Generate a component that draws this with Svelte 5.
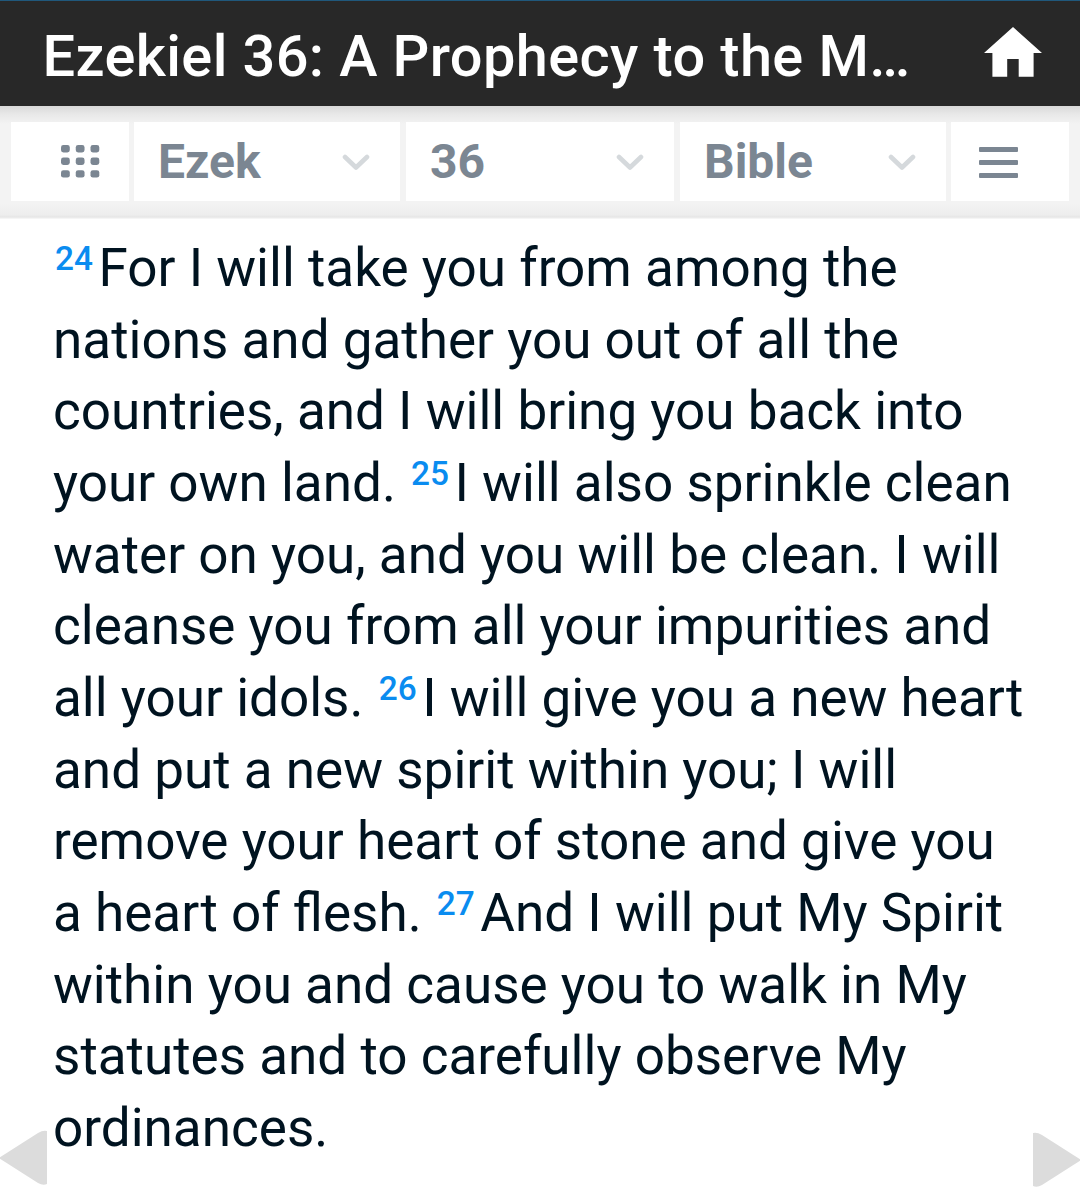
<script>
  const lines = [
    [{ verse: 24 }, 'For I will take you from among the'],
    ['nations and gather you out of all the'],
    ['countries, and I will bring you back into'],
    ['your own land. ', { verse: 25 }, 'I will also sprinkle clean'],
    ['water on you, and you will be clean. I will'],
    ['cleanse you from all your impurities and'],
    ['all your idols. ', { verse: 26 }, 'I will give you a new heart'],
    ['and put a new spirit within you; I will'],
    ['remove your heart of stone and give you'],
    ['a heart of flesh. ', { verse: 27 }, 'And I will put My Spirit'],
    ['within you and cause you to walk in My'],
    ['statutes and to carefully observe My'],
    ['ordinances.']
  ];
  const pickers = ['Ezek', '36', 'Bible'];
  const steps = [0, 1, 2];
</script>

<div class="page">
  <header>
    <h1>Ezekiel 36: A Prophecy to the M…</h1>
    <svg class="home" width="58" height="50" viewBox="0 0 58 50" aria-label="Home">
      <path d="M29 0 58 26H49.6V49.8H34.7V32H23.2V49.8H8.4V26H0Z" fill="#fff" />
    </svg>
  </header>

  <nav>
    <button class="grid" aria-label="All books">
      <svg width="39" height="33" viewBox="0 0 39 33">
        {#each steps as row}
          {#each steps as col}
            <rect x={col * 14.75} y={row * 12.6} width="8.8" height="7.4" rx="2.4" fill="#7b8692" />
          {/each}
        {/each}
      </svg>
    </button>
    {#each pickers as label}
      <button class="picker">
        <span>{label}</span>
        <svg width="28" height="17" viewBox="0 0 28 17">
          <path d="M3 3 14 13.5 25 3" fill="none" stroke="#d5d9dc" stroke-width="4.6" stroke-linecap="round" stroke-linejoin="round" />
        </svg>
      </button>
    {/each}
    <button class="menu" aria-label="Menu">
      <svg width="39" height="32" viewBox="0 0 39 32">
        {#each steps as row}
          <rect x="0" y={row * 13} width="39" height="5" rx="1" fill="#7b8692" />
        {/each}
      </svg>
    </button>
  </nav>

  <main>
    {#each lines as line}
      <p>{#each line as part}{#if part.verse}<sup>{part.verse}</sup>{:else}{part}{/if}{/each}</p>
    {/each}
  </main>

  <svg class="arrow prev" width="48" height="56" viewBox="0 0 48 56" aria-label="Previous">
    <path d="M-1 28 38 3Q43 0 47 1V54Q43 56 38 53Z" fill="#dcdcdc" />
  </svg>
  <svg class="arrow next" width="48" height="56" viewBox="0 0 48 56" aria-label="Next">
    <path d="M49 28 10 3Q5 0 1 1V54Q5 56 10 53Z" fill="#dcdcdc" />
  </svg>
</div>

<style>
  :global(body) {
    margin: 0;
    background: #fff;
  }
  .page {
    position: relative;
    width: 1080px;
    height: 1189px;
    overflow: hidden;
    background: #fff;
    font-family: Roboto, sans-serif;
  }
  header {
    box-sizing: border-box;
    height: 106px;
    display: flex;
    justify-content: space-between;
    align-items: flex-start;
    padding: 0 38px 0 42.5px;
    background: #282828;
    border-top: 1px solid #20587c;
  }
  h1 {
    margin: 0;
    padding-top: 5px;
    font-size: 57.7px;
    line-height: 100px;
    font-weight: 500;
    letter-spacing: 0.4px;
    white-space: nowrap;
    color: #fff;
  }
  .home {
    margin-top: 26px;
  }
  nav {
    box-sizing: border-box;
    height: 113px;
    display: grid;
    grid-template-columns: 118px 266px 269px 267px 118px;
    column-gap: 5px;
    padding: 16px 11px 18px;
    background: linear-gradient(#d9d9d9, #e8e8e8 8px, #f3f3f3 18px, #f3f3f3 98px, #ededed 109px, #e6e6e6 111px, #fafafa);
  }
  button {
    display: flex;
    align-items: center;
    border: 0;
    margin: 0;
    padding: 0;
    background: #fff;
    font: inherit;
  }
  .grid {
    padding-left: 50px;
  }
  .menu {
    padding: 2px 0 0 28px;
  }
  .picker {
    justify-content: space-between;
    padding: 0 30px 0 24px;
    font-size: 48px;
    font-weight: 700;
    color: #7b8692;
  }
  .picker svg {
    margin-top: 2px;
  }
  .picker + .picker {
    margin-left: 1px;
  }
  main {
    padding: 14px 0 0 53px;
  }
  p {
    margin: 0;
    height: 71.67px;
    font-size: 53.06px;
    line-height: 71.67px;
    white-space: pre;
    color: #001320;
  }
  sup {
    display: inline-block;
    box-sizing: border-box;
    width: 45.5px;
    padding-left: 2px;
    font-size: 33.4px;
    line-height: 1;
    font-weight: 500;
    vertical-align: 15.8px;
    color: #0a8cf0;
  }
  .arrow {
    position: absolute;
    top: 1130px;
  }
  .prev {
    left: 0;
  }
  .next {
    right: 0;
    top: 1132px;
  }
</style>
